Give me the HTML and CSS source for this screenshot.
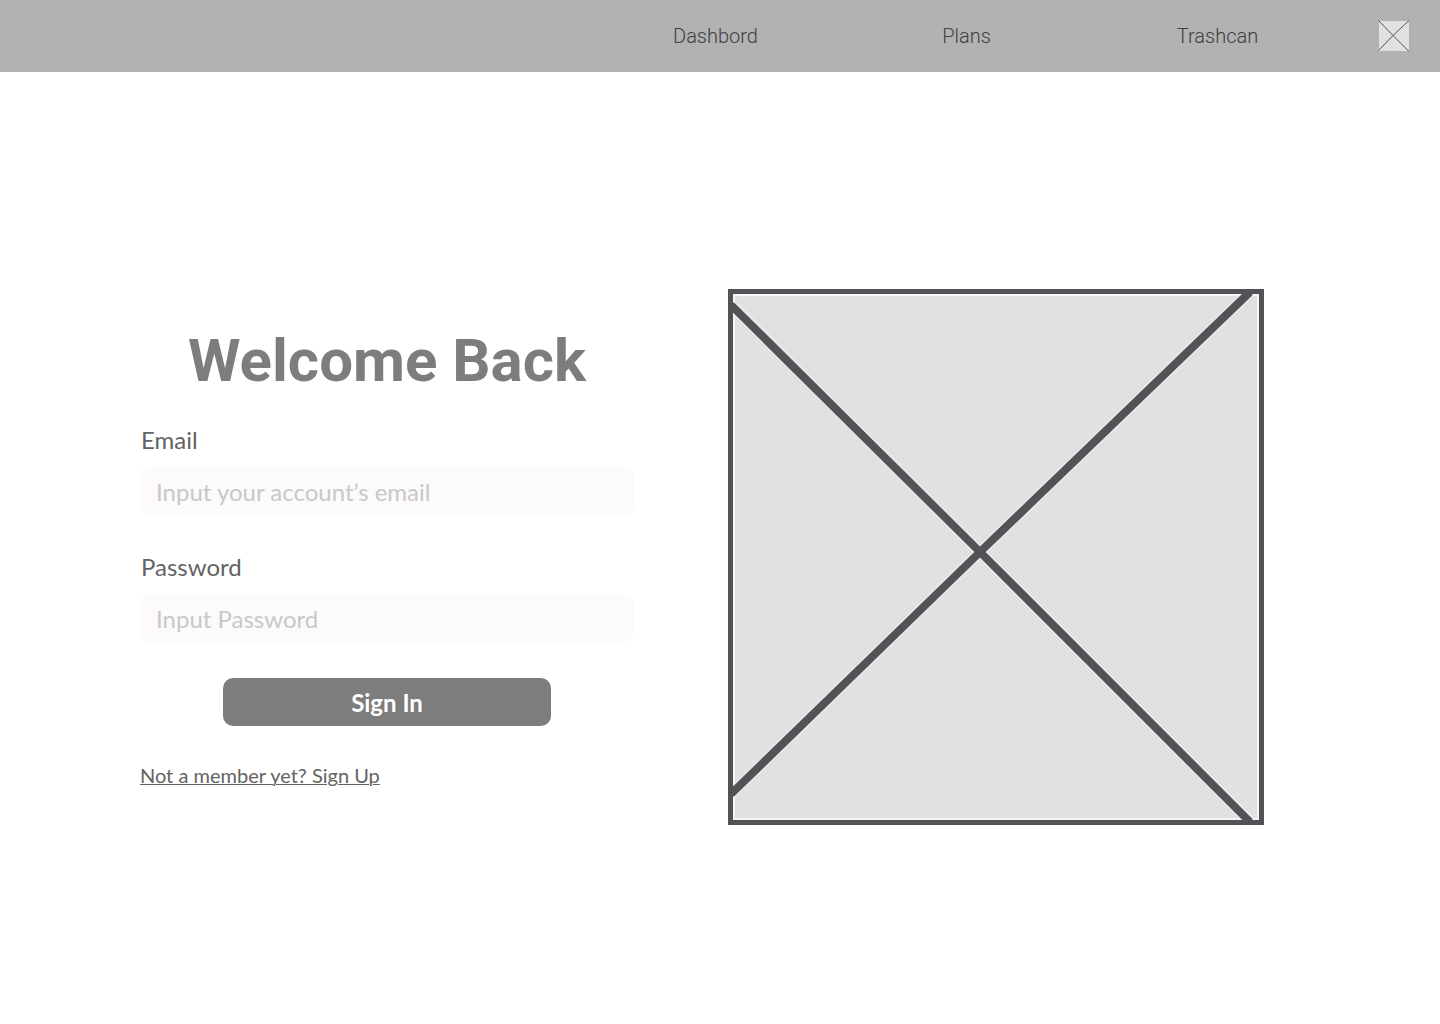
FILE: index.html
```
<!DOCTYPE html>
<html lang="en">
<head>
  <meta charset="utf-8">
  <meta name="viewport" content="width=device-width, initial-scale=1">
  <title>Sign In</title>
  <link rel="stylesheet" href="styles.css">
</head>
<body>
  <header class="topbar">
    <nav class="topnav">
      <a href="#dashboard">Dashbord</a>
      <a href="#plans">Plans</a>
      <a href="#trashcan">Trashcan</a>
    </nav>
    <a class="profile" href="#profile" aria-label="Profile">
      <svg viewBox="0 0 32 32" aria-hidden="true">
        <rect x="1" y="1" width="30" height="30" fill="#e1e1e1"/>
        <path d="M0.5 0.5L15 15.5L31 31.5M31 0.5L15 15.5L0.5 30.5" stroke="#555" stroke-width="1" fill="none"/>
      </svg>
    </a>
  </header>
  <main class="page">
    <form class="signin">
      <h1 class="title">Welcome Back</h1>
      <div class="field">
        <label for="email">Email</label>
        <input id="email" type="email" placeholder="Input your account’s email">
      </div>
      <div class="field">
        <label for="password">Password</label>
        <input id="password" type="password" placeholder="Input Password">
      </div>
      <button class="submit" type="submit">Sign In</button>
      <a class="signup" href="#signup">Not a member yet? Sign Up</a>
    </form>
    <svg class="picture" viewBox="0 0 536 536" role="img" aria-label="Placeholder picture">
      <rect width="536" height="536" fill="#535257"/>
      <rect x="5" y="5" width="526" height="526" fill="#f6f6f6"/>
      <rect x="7" y="7" width="522" height="522" fill="#e1e1e1"/>
      <g fill="none" stroke-linecap="butt">
        <path d="M4 16L252 263L522 532M4 504L252 263L521 4" stroke="#eaeaea" stroke-width="11"/>
        <path d="M3 16L252 263L522 533M3 505L252 263L522 3" stroke="#525357" stroke-width="8"/>
      </g>
      <path d="M0 0H536V536H0ZM5 5V531H531V5Z" fill="#535257" fill-rule="evenodd"/>
    </svg>
  </main>
</body>
</html>
```
FILE: styles.css
```
* {
  box-sizing: border-box;
}

body {
  margin: 0;
  background: #fff;
  color: #636363;
  font-family: Lato, "Liberation Sans", sans-serif;
}

.topbar {
  display: flex;
  justify-content: flex-end;
  align-items: center;
  gap: 35px;
  min-height: 72px;
  padding: 0 30px;
  background: #b2b2b2;
}

.topnav {
  display: grid;
  grid-template-columns: repeat(3, 251px);
  text-align: center;
}

.topnav a {
  color: #404040;
  font: 300 20px/24px Roboto, sans-serif;
  text-decoration: none;
}

.profile,
.profile svg {
  display: block;
  width: 32px;
  height: 32px;
}

.page {
  display: grid;
  grid-template-columns: 494fr 536fr;
  column-gap: 94px;
  align-items: start;
  padding: 217px 176px 0 140px;
}

.signin {
  display: flex;
  flex-direction: column;
  padding-top: 36px;
}

.title {
  margin: 0 0 27px;
  color: #7d7d7d;
  font: 700 60px/72px Roboto, sans-serif;
  text-align: center;
}

.field {
  display: flex;
  flex-direction: column;
  gap: 11px;
  margin-bottom: 36px;
}

.field label {
  padding-left: 1px;
  font-size: 24px;
  line-height: 32px;
}

.field input {
  width: 100%;
  height: 48px;
  padding: 0 16px;
  border: 0;
  border-radius: 10px;
  background: #fcfafb;
  color: #636363;
  font: inherit;
  font-size: 24px;
}

.field input::placeholder {
  color: #c8c8c8;
  opacity: 1;
}

.submit {
  align-self: center;
  width: 328px;
  height: 48px;
  margin-bottom: 36px;
  padding: 0;
  border: 0;
  border-radius: 10px;
  background: #7d7d7d;
  color: #fff;
  font: inherit;
  font-size: 24px;
  font-weight: 700;
}

.signup {
  align-self: flex-start;
  color: #636363;
  font-size: 20px;
  line-height: 26px;
  text-decoration-thickness: 1px;
}

.picture {
  display: block;
  width: 100%;
}
```
